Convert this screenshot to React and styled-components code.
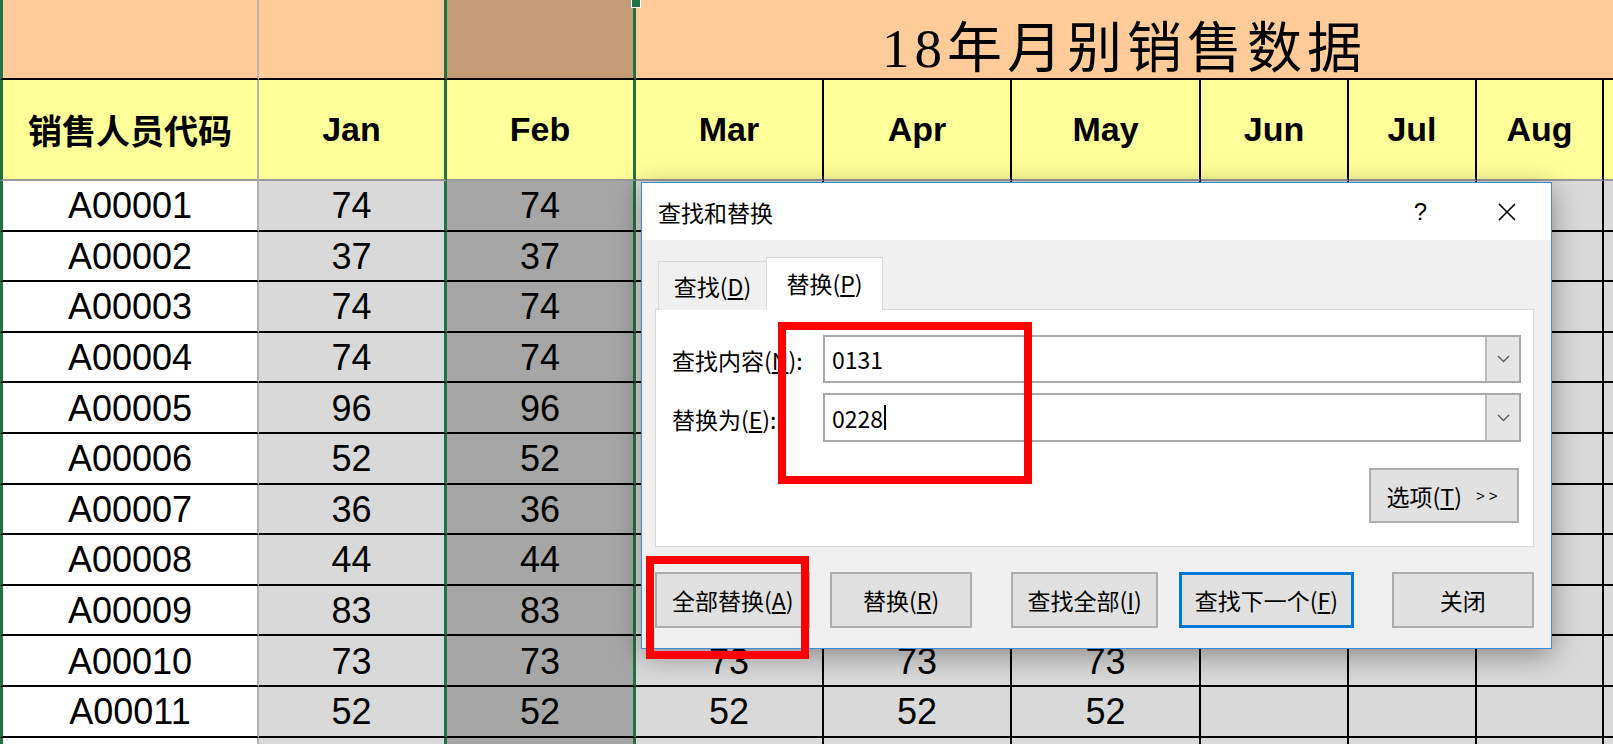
import React from 'react';
import styled, { createGlobalStyle } from 'styled-components';

const GREEN = '#217346';
const GRID = '#b4b4b4';
const INK = '#000';
const CJK = '"Noto Sans CJK SC", "Liberation Sans", sans-serif';

const GlobalStyle = createGlobalStyle`
  html, body {
    margin: 0;
    padding: 0;
    overflow: hidden;
    background: #fff;
  }
  body {
    font-family: "Liberation Sans", Arial, sans-serif;
  }
`;

const Screen = styled.div`
  position: relative;
  width: 1613px;
  height: 744px;
  overflow: hidden;
`;

/* ---------- spreadsheet ---------- */

const Sheet = styled.div`
  display: grid;
  grid-template-columns: 259px 188px 189px 188px 188px 189px 148px 128px 127px 1fr;
  grid-template-rows: 80px 101px;
  grid-auto-rows: 50.6px;
`;

const Cell = styled.div`
  position: relative;
  box-sizing: border-box;
  display: flex;
  align-items: center;
  justify-content: center;
  min-width: 0;
  white-space: nowrap;
  color: #000;
  background: ${p => p.$bg};
  border-right: ${p => p.$lw}px solid ${p => p.$line};
  border-bottom: 2px solid ${p => p.$under || INK};
  ${p => p.$edge && `border-left: 3px solid ${GREEN};`}
`;

const TitleCell = styled(Cell)`
  grid-column: 4 / -1;
  padding-top: 8px;
  font-family: "Liberation Serif", "Noto Sans CJK SC", serif;
  font-size: 55px;
  letter-spacing: 5px;
`;

const HeadCell = styled(Cell)`
  font-family: "Liberation Sans", "Noto Sans CJK SC", sans-serif;
  font-weight: 700;
  font-size: 34px;
`;

const DataCell = styled(Cell)`
  font-size: 36px;
  padding-top: 2px;
`;

const FillHandle = styled.div`
  position: absolute;
  left: 631px;
  top: -2px;
  width: 8px;
  height: 8px;
  background: ${GREEN};
  border: 1px solid #fff;
`;

/* ---------- dialog ---------- */

const Dialog = styled.div`
  position: absolute;
  left: 641px;
  top: 182px;
  width: 911px;
  height: 467px;
  box-sizing: border-box;
  display: flex;
  flex-direction: column;
  background: #f0f0f0;
  border: 1px solid #3f8bd6;
  box-shadow: 0 6px 26px rgba(0, 0, 0, 0.38);
  font-family: ${CJK};
  font-size: 23px;
  color: #000;
`;

const TitleBar = styled.div`
  height: 57px;
  display: flex;
  align-items: center;
  justify-content: space-between;
  padding: 0 34px 0 16px;
  background: #fff;
`;

const TitleActions = styled.div`
  display: flex;
  align-items: center;
  gap: 70px;
`;

const Help = styled.span`
  font-family: "Liberation Sans", sans-serif;
  font-size: 24px;
`;

const Body = styled.div`
  flex: 1;
  display: flex;
  flex-direction: column;
  padding: 18px 17px 19px 13px;
`;

const TabRow = styled.div`
  position: relative;
  z-index: 1;
  display: flex;
  align-items: flex-end;
  height: 52px;
  margin: 0 0 -1px 3px;
`;

const Tab = styled.div`
  box-sizing: border-box;
  width: ${p => p.$w}px;
  height: ${p => (p.$active ? 53 : 49)}px;
  display: flex;
  align-items: center;
  justify-content: center;
  padding-bottom: ${p => (p.$active ? 2 : 0)}px;
  background: ${p => (p.$active ? '#fff' : '#f0f0f0')};
  border: 1px solid #d9d9d9;
  border-bottom: none;
  ${p => !p.$active && 'border-right: none;'}
`;

const Panel = styled.div`
  box-sizing: border-box;
  height: 238px;
  display: flex;
  flex-direction: column;
  padding: 25px 12px 0 16px;
  background: #fff;
  border: 1px solid #d9d9d9;
`;

const Fields = styled.div`
  display: grid;
  grid-template-columns: 151px 1fr;
  grid-template-rows: 48px 49px;
  row-gap: 10px;
  align-items: center;
`;

const Label = styled.div`
  padding-top: 2px;
`;

const Combo = styled.div`
  box-sizing: border-box;
  height: 100%;
  display: flex;
  background: #fff;
  border: 2px solid #a9a9a9;
`;

const ComboText = styled.div`
  flex: 1;
  display: flex;
  align-items: center;
  padding-left: 7px;
`;

const Caret = styled.span`
  display: inline-block;
  width: 2px;
  height: 25px;
  margin-left: 1px;
  background: #000;
`;

const DropButton = styled.div`
  width: 32px;
  display: flex;
  align-items: center;
  justify-content: center;
  background: #e5e5e5;
  border-left: 2px solid #bdbdbd;
`;

const OptionsRow = styled.div`
  display: flex;
  justify-content: flex-end;
  margin-top: 26px;
  padding-right: 2px;
`;

const Button = styled.div`
  box-sizing: border-box;
  width: ${p => p.$w}px;
  height: ${p => p.$h || 56}px;
  margin-left: ${p => p.$gap || 0}px;
  display: flex;
  align-items: center;
  justify-content: center;
  background: #e1e1e1;
  border: ${p => (p.$primary ? '3px solid #0078d7' : '2px solid #adadad')};
`;

const Arrows = styled.span`
  margin-left: 14px;
  font-family: "Liberation Sans", sans-serif;
  font-size: 15px;
  letter-spacing: 4px;
`;

const ButtonRow = styled.div`
  display: flex;
  margin-top: 25px;
`;

const RedBox = styled.div`
  position: absolute;
  left: ${p => p.$x}px;
  top: ${p => p.$y}px;
  width: ${p => p.$w}px;
  height: ${p => p.$h}px;
  box-sizing: border-box;
  border: 8px solid #ff0000;
  pointer-events: none;
`;

/* ---------- data ---------- */

const columns = [
  { bg: '#ffffff', line: GRID, lw: 2 },
  { bg: '#d9d9d9', line: GREEN, lw: 3 },
  { bg: '#a6a6a6', line: GREEN, lw: 3 },
  { bg: '#d9d9d9', line: INK, lw: 2 },
  { bg: '#d9d9d9', line: INK, lw: 2 },
  { bg: '#d9d9d9', line: INK, lw: 2 },
  { bg: '#d9d9d9', line: INK, lw: 2 },
  { bg: '#d9d9d9', line: INK, lw: 2 },
  { bg: '#d9d9d9', line: INK, lw: 2 },
  { bg: '#d9d9d9', line: 'transparent', lw: 0 },
];

const headers = ['销售人员代码', 'Jan', 'Feb', 'Mar', 'Apr', 'May', 'Jun', 'Jul', 'Aug', ''];

const sales = [
  ['A00001', 74], ['A00002', 37], ['A00003', 74], ['A00004', 74],
  ['A00005', 96], ['A00006', 52], ['A00007', 36], ['A00008', 44],
  ['A00009', 83], ['A00010', 73], ['A00011', 52],
];

// Mar–May values of the rows hidden behind the dialog are not shown
const rowCells = (code, v, idx) => {
  const later = idx >= 9 ? v : '';
  return [code, v, v, later, later, later, '', '', '', ''];
};

const Chevron = () => (
  <svg width="13" height="8" viewBox="0 0 13 8">
    <path d="M1 1 L6.5 6.5 L12 1" fill="none" stroke="#5a5a5a" strokeWidth="1.4" />
  </svg>
);

const CloseIcon = () => (
  <svg width="20" height="20" viewBox="0 0 20 20">
    <path d="M2 2 L18 18 M18 2 L2 18" fill="none" stroke="#000" strokeWidth="1.6" />
  </svg>
);

export default function App() {
  return (
    <Screen>
      <GlobalStyle />
      <Sheet>
        <Cell $bg="#ffcc99" $line={GRID} $lw={2} $edge />
        <Cell $bg="#ffcc99" $line={GREEN} $lw={3} />
        <Cell $bg="#c59c76" $line={GREEN} $lw={3} />
        <TitleCell $bg="#ffcc99" $line="transparent" $lw={0}>18年月别销售数据</TitleCell>

        {headers.map((h, i) => (
          <HeadCell
            key={'h' + i}
            $bg="#ffff99"
            $line={columns[i].line}
            $lw={columns[i].lw}
            $under="#9a9a9a"
            $edge={i === 0}
          >
            {h}
          </HeadCell>
        ))}

        {sales.map(([code, v], r) =>
          rowCells(code, v, r).map((t, i) => (
            <DataCell
              key={code + i}
              $bg={columns[i].bg}
              $line={columns[i].line}
              $lw={columns[i].lw}
              $edge={i === 0}
            >
              {t}
            </DataCell>
          ))
        )}
        {columns.map((c, i) => (
          <DataCell key={'last' + i} $bg={c.bg} $line={c.line} $lw={c.lw} $edge={i === 0} />
        ))}
      </Sheet>
      <FillHandle />

      <Dialog>
        <TitleBar>
          <span>查找和替换</span>
          <TitleActions>
            <Help>?</Help>
            <CloseIcon />
          </TitleActions>
        </TitleBar>
        <Body>
          <TabRow>
            <Tab $w={108}>查找(<u>D</u>)</Tab>
            <Tab $w={117} $active>替换(<u>P</u>)</Tab>
          </TabRow>
          <Panel>
            <Fields>
              <Label>查找内容(<u>N</u>):</Label>
              <Combo>
                <ComboText>0131</ComboText>
                <DropButton><Chevron /></DropButton>
              </Combo>
              <Label>替换为(<u>E</u>):</Label>
              <Combo>
                <ComboText>0228<Caret /></ComboText>
                <DropButton><Chevron /></DropButton>
              </Combo>
            </Fields>
            <OptionsRow>
              <Button $w={150} $h={55}>
                选项(<u>T</u>)<Arrows>&gt;&gt;</Arrows>
              </Button>
            </OptionsRow>
          </Panel>
          <ButtonRow>
            <Button $w={156}>全部替换(<u>A</u>)</Button>
            <Button $w={142} $gap={20}>替换(<u>R</u>)</Button>
            <Button $w={148} $gap={39}>查找全部(<u>I</u>)</Button>
            <Button $w={175} $gap={21} $primary>查找下一个(<u>F</u>)</Button>
            <Button $w={143} $gap={38}>关闭</Button>
          </ButtonRow>
        </Body>
      </Dialog>

      <RedBox $x={778} $y={322} $w={254} $h={162} />
      <RedBox $x={646} $y={556} $w={163} $h={103} />
    </Screen>
  );
}
